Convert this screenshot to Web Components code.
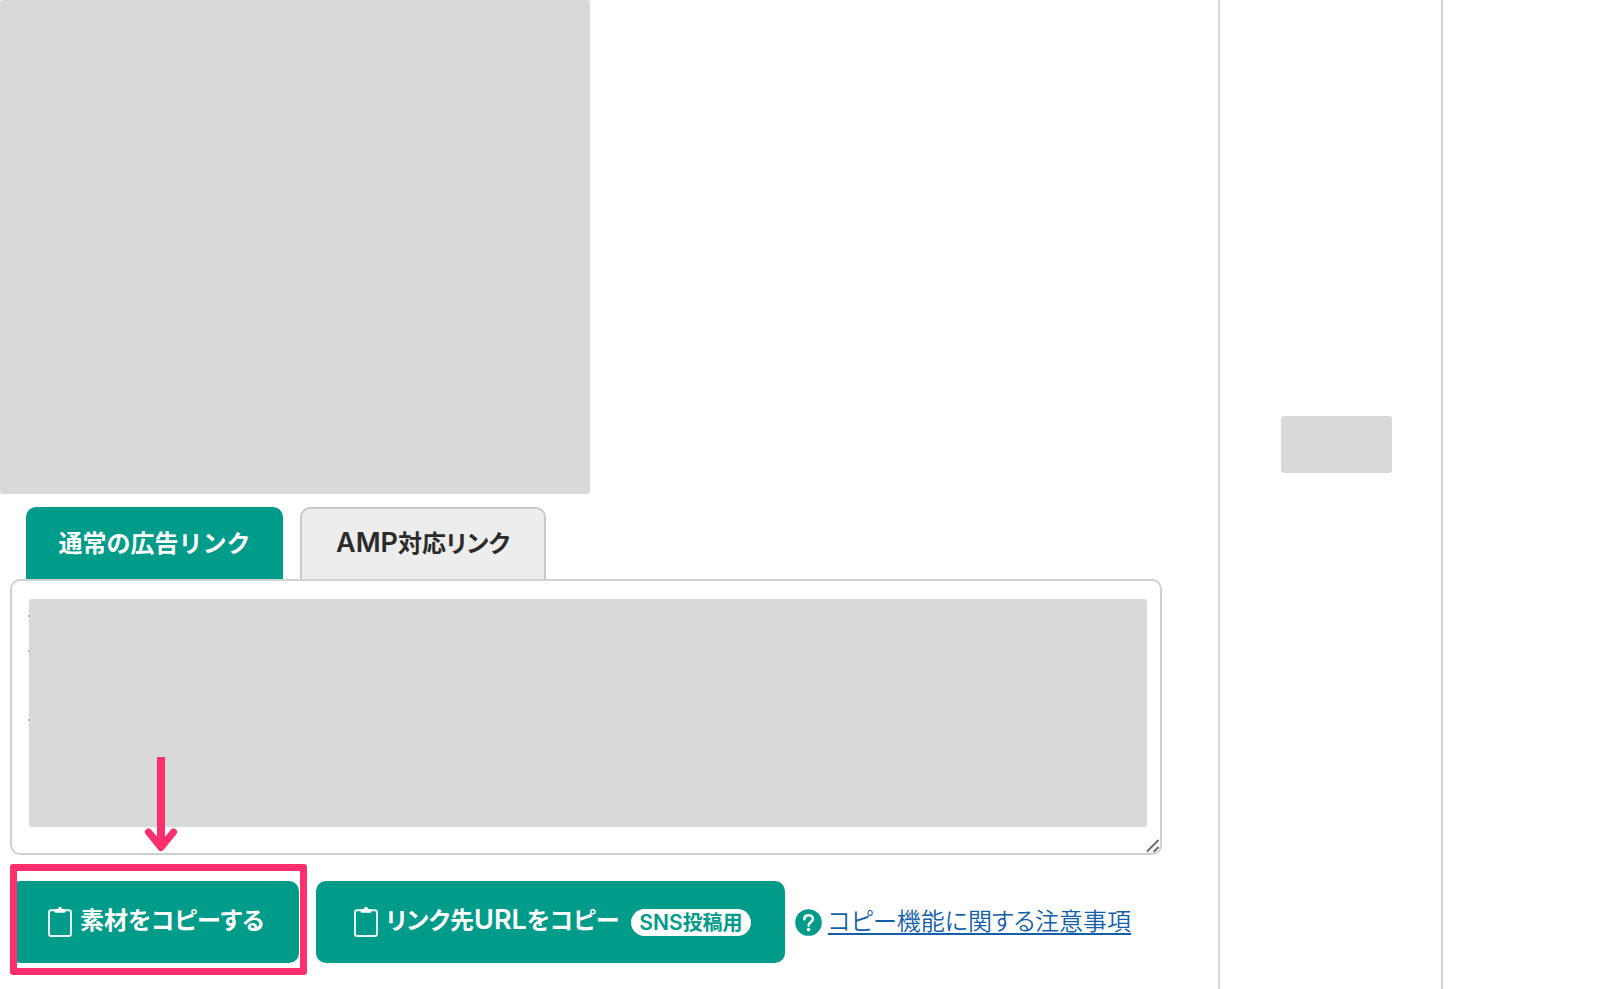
<!DOCTYPE html>
<html lang="ja">
<head>
<meta charset="utf-8">
<title>広告リンク</title>
<style>
html,body{margin:0;background:#fff}
body{font-family:"Noto Sans CJK JP",sans-serif;color:#2b2b2b}
</style>
</head>
<body>
<ad-page></ad-page>
<script>
const define = (name, html, setup) => {
  const t = document.createElement('template');
  t.innerHTML = html;
  customElements.define(name, class extends HTMLElement {
    constructor() {
      super();
      this.attachShadow({mode: 'open'}).append(t.content.cloneNode(true));
    }
    connectedCallback() { if (setup) setup(this, this.shadowRoot); }
  });
};

define('clip-icon', `
<style>:host{display:block;width:24px;height:30px;flex:none}svg{display:block}</style>
<svg width="24" height="30" viewBox="0 0 24 30" aria-hidden="true">
<rect x="1" y="3.2" width="22" height="25.8" rx="2.2" fill="none" stroke="#e9f7f4" stroke-width="2"/>
<path d="M6.500 3Q6.500 1.900 7.600 1.900H9.700C10 .7 10.800 0 12 0s2 .7 2.300 1.900H16.400Q17.500 1.900 17.500 3V4.500Q17.500 5.800 16.200 5.800H7.800Q6.500 5.800 6.500 4.500Z" fill="#fff"/>
</svg>`);

define('blank-block', `
<style>:host{display:block;background:#d9d9d9;border-radius:3px}</style>`);

define('link-tab', `
<style>
:host{display:block}
button{box-sizing:border-box;height:72px;padding:0 16px 4px;border:2px solid #c8c9c9;border-bottom:0;border-radius:10px 10px 0 0;background:#ededed;color:#2b2b2b;font:700 24px/36px "Noto Sans CJK JP",sans-serif;font-feature-settings:"palt";white-space:nowrap;cursor:pointer;display:block;width:100%}
:host([active]) button{background:#009b89;border-color:#009b89;color:#fff;font-feature-settings:normal}
</style>
<button type="button" role="tab"><slot></slot></button>`, (el, root) => {
  root.querySelector('button').setAttribute('aria-selected', el.hasAttribute('active'));
});

define('link-tabs', `
<style>:host{display:flex;gap:17px;padding:0 26px}
.a{width:257px}.b{width:246px}
.latin{font:600 27px/36px Inter,sans-serif}</style>
<link-tab class="a" active>通常の広告リンク</link-tab>
<link-tab class="b"><span class="latin">AMP</span>対応リンク</link-tab>`);

define('code-panel', `
<style>
:host{display:grid;position:relative;height:276px;margin:0 56px 0 10px}
textarea,blank-block{grid-area:1/1}
textarea{box-sizing:border-box;width:100%;height:100%;margin:0;padding:16px;border:2px solid #cfd1d1;border-radius:10px;background:#fff;resize:none;outline:0}
blank-block{margin:20px 15px 28px 19px}
.grip{position:absolute;right:1px;bottom:1px}
.marks{position:absolute;left:18px;top:36px}
</style>
<textarea aria-label="広告リンクのコード" readonly></textarea>
<svg class="marks" width="2" height="108" aria-hidden="true"><path d="M0 1h2M0 36h2M0 105h2" stroke="#bbb" stroke-width="2"/></svg>
<blank-block></blank-block>
<svg class="grip" width="16" height="16" viewBox="0 0 16 16" aria-hidden="true"><path d="M2 13.500L13.500 2M8.500 14L13.500 9" stroke="#6d6868" stroke-width="1.800" fill="none"/></svg>`);

define('copy-button', `
<style>
:host{display:block;flex:none}
button{box-sizing:border-box;width:100%;height:82px;padding:0 34px 0 38px;border:0;border-radius:10px;background:#009b89;color:#fff;font:700 24px/36px "Noto Sans CJK JP",sans-serif;font-feature-settings:"palt";white-space:nowrap;display:flex;align-items:center;gap:8px;cursor:pointer}
.label{padding-bottom:6px}
::slotted([slot=badge]){margin-left:auto}
</style>
<button type="button"><clip-icon></clip-icon><span class="label"><slot></slot></span><slot name="badge"></slot></button>`);

define('call-out', `
<style>
:host{display:block;position:relative}
.frame{position:absolute;left:0;right:-8px;top:-17px;bottom:-12px;box-sizing:border-box;border:7px solid #ff2f6d;border-radius:3px;pointer-events:none}
svg{position:absolute;left:134px;top:-125px;pointer-events:none}
</style>
<slot></slot>
<div class="frame"></div>
<svg width="34" height="97" viewBox="0 0 34 97" aria-hidden="true">
<path d="M17 1V86" stroke="#ff2f6d" stroke-width="8"/>
<path d="M4.500 76L17 91.500L29.500 76" fill="none" stroke="#ff2f6d" stroke-width="7" stroke-linecap="round" stroke-linejoin="round"/>
<path d="M8 77L17 84L26 77L17 91Z" fill="#ff2f6d"/>
</svg>`);

define('help-link', `
<style>
:host{display:flex;align-items:center;gap:6px;white-space:nowrap}
svg{display:block;flex:none}
a{color:#155faa;font:350 24px/36px "Noto Sans CJK JP",sans-serif;font-feature-settings:"palt";text-decoration:underline;text-decoration-thickness:2px;text-underline-offset:3px;padding-bottom:4px}
</style>
<svg width="27" height="27" viewBox="0 0 27 27" aria-hidden="true"><circle cx="13.500" cy="13.500" r="13.300" fill="#009b89"/><path d="M9.300 10.200C9.300 7.600 11.100 6.300 13.600 6.300S17.900 7.800 17.900 10C17.900 13 13.600 13 13.600 16.400" fill="none" stroke="#fff" stroke-width="2.600" stroke-linecap="round"/><circle cx="13.600" cy="20.600" r="1.800" fill="#fff"/></svg>
<a href="#notes"><slot></slot></a>`);

define('copy-actions', `
<style>
:host{display:flex;align-items:center;margin:26px 0 0 10px}
.one{width:289px}.two{width:469px;margin:0 10px 0 17px}
.latin{font:600 27px/36px Inter,sans-serif}
.badge{box-sizing:border-box;flex:none;width:120px;height:27px;border-radius:14px;background:#fff;color:#009b89;font-size:20px;line-height:26px;text-align:center;font-weight:700}
.badge .latin{font-size:21px;line-height:26px}
</style>
<call-out><copy-button class="one">素材をコピーする</copy-button></call-out>
<copy-button class="two">リンク先<span class="latin">URL</span>をコピー<span slot="badge" class="badge"><span class="latin">SNS</span>投稿用</span></copy-button>
<help-link>コピー機能に関する注意事項</help-link>`);

define('side-column', `
<style>:host{box-sizing:border-box;display:block;width:225px;border:solid #d5d5d5;border-width:0 2px;padding:416px 49px 0 61px}
blank-block{height:57px}</style>
<blank-block></blank-block>`);

define('ad-page', `
<style>
:host{display:grid;grid-template-columns:minmax(0,1fr) auto 157px;min-height:100vh;background:#fff}
.shot{width:590px;height:494px;margin-bottom:13px}
</style>
<main>
<blank-block class="shot"></blank-block>
<link-tabs role="tablist"></link-tabs>
<code-panel></code-panel>
<copy-actions></copy-actions>
</main>
<side-column></side-column>`);
</script>
</body>
</html>
